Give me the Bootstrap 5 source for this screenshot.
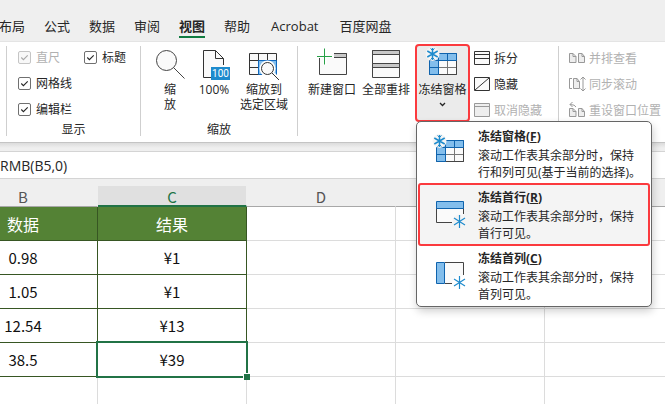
<!DOCTYPE html>
<html lang="zh-CN">
<head>
<meta charset="utf-8">
<meta name="viewport" content="width=device-width, initial-scale=1">
<title>视图 - 冻结窗格</title>
<link href="https://cdn.jsdelivr.net/npm/bootstrap@5.3.0/dist/css/bootstrap.min.css" rel="stylesheet">
<style>
body{font-family:"Open Sans","Noto Sans CJK SC",sans-serif;font-size:12px;line-height:15px;color:#262626;background:#fff;overflow:hidden}
svg{display:block;flex:none;overflow:visible}
button{font-size:12px;line-height:15px;color:inherit;background:none;border:0;padding:0}
.topbar{background:#efefef;height:41px;padding-top:16px}
.tabs{gap:19px;margin-left:-1px}
.tabs a{font-size:13px;line-height:20px;height:22px;color:#262626;text-decoration:none;white-space:nowrap}
.tabs a.current{font-weight:700;border-bottom:2px solid #107c41}
.tabs a.latin{padding:0 2px}
.ribbon{height:102px;background:#fff;border-top:1px solid #e4e4e4;border-bottom:1px solid #c4c4c4;padding:4px 0 6px}
.group{border-right:1px solid #cfcfcf;flex:none}
.group:last-child{border-right:0}
.g-edge{width:7px}
.g-show{width:134px}
.g-zoom{width:157px}
.g-window{width:261px;padding-left:9px}
.g-side{padding-left:10px}
.caption{line-height:16px;margin-bottom:-2px;text-align:center}
.checks{display:grid;grid-template-columns:66px 1fr;grid-auto-rows:26px;padding-left:11px;margin-top:-2px}
.checks div{gap:5px}
.checks .form-check-input{width:13px;height:13px;margin:0;border:1px solid #707070;border-radius:2px;background-color:#fff;box-shadow:none;flex:none}
.checks .form-check-input:checked{background-image:url("data:image/svg+xml,%3csvg xmlns='http://www.w3.org/2000/svg' viewBox='0 0 12 12'%3e%3cpath d='M2.5 6l2.3 2.3 4.7-4.7' fill='none' stroke='%23262626' stroke-width='1.2'/%3e%3c/svg%3e")}
.checks .form-check-input:disabled{opacity:.4;background-color:#eee}
.checks label{white-space:nowrap}
.off,.checks .form-check-input:disabled~label{color:#b1b1b1;opacity:1}
.zoom-tools{gap:8px;padding-left:14px}
.tool{white-space:nowrap;text-align:center;padding-top:2px}
.tool svg{margin:0 auto 2px}
.t-lens{width:30px}
.t-hundred{width:34px;margin-left:4px}
.t-select{width:50px}
.t-win{width:50px}
.picked{width:55px;height:78px;margin-top:-2px;padding:0 0 5px;border:2px solid #fb3a3e;border-radius:4px;background:#ebebeb}
.small-tool{height:26px;gap:4px;margin-top:-1px;margin-bottom:1px;white-space:nowrap}
.freeze-menu{display:block;top:100%;left:1px;width:236px;min-width:0;margin-top:-1px;padding:0 1px 1px;border:1px solid #666;border-radius:5px;background:#fff;box-shadow:1px 4px 8px rgba(0,0,0,.2);font-size:12px}
.freeze-menu .dropdown-item{border:2px solid transparent;border-radius:3px;height:61px;padding:3px 0 0 14px;gap:14px;color:#262626}
.freeze-menu .dropdown-item.hot{background:#f4f4f4;border-color:#fb3a3e;height:63px;margin-bottom:-2px}
.freeze-menu strong,.freeze-menu .line{display:block;text-align:left;line-height:17px}
.freeze-menu strong{line-height:20px}
.gap-strip{height:8px;background:linear-gradient(#dcdcdc,#efefef 5px)}
.formula{width:100%;height:28px;border:solid #d4d4d4;border-width:1px 0;padding:0;font-size:14px;font-family:"Open Sans",sans-serif;color:#262626;background:#fff;display:block;border-radius:0}
.sheet{overflow:hidden}
.grid{table-layout:fixed;width:calc(100% + 51px);margin:0 0 0 -51px;border-collapse:separate;border-spacing:0;font-family:"Noto Sans CJK SC",sans-serif;font-size:15px;line-height:20px;color:#111;text-align:center}
.grid col{width:149px}
.grid col.rest{width:auto}
.grid th,.grid td{padding:0;font-weight:400;height:34px;border-right:1px solid #dcdcdc;border-bottom:1px solid #dcdcdc}
.grid .letters th{height:28px;padding-top:8px;background:#efefef;color:#555;border-right-color:#efefef;border-bottom-color:#a8a8a8;line-height:18px}
.grid .letters th.on{color:#217346;background:linear-gradient(#efefef 7px,#e0e0e0 7px);border-bottom:2px solid #217346;line-height:17px}
.grid .titles th.fill{background:#548235;color:#fff;font-size:16px}
.grid .fill{border-color:#375623}
.grid td.active{position:relative;border-bottom-color:transparent;border-right-color:transparent}
.grid td.active::before{content:"";position:absolute;inset:-2px -2px -2px -2px;border:2px solid #217346}
.grid td.active::after{content:"";position:absolute;right:-4px;bottom:-4px;width:7px;height:7px;background:#217346;border:solid #fff;border-width:1px 0 0 1px}
</style>
<script src="https://cdn.jsdelivr.net/npm/bootstrap@5.3.0/dist/js/bootstrap.bundle.min.js"></script>
</head>
<body>
<header class="topbar">
<nav class="tabs d-flex">
<a href="#">布局</a><a href="#">公式</a><a href="#">数据</a><a href="#">审阅</a><a href="#" class="current">视图</a><a href="#">帮助</a><a href="#" class="latin">Acrobat</a><a href="#">百度网盘</a>
</nav>
</header>
<section class="ribbon d-flex">
<div class="group g-edge"></div>
<div class="group g-show d-flex flex-column justify-content-between">
<div class="checks">
<div class="d-flex align-items-center"><input class="form-check-input" type="checkbox" id="ruler" checked disabled><label for="ruler">直尺</label></div>
<div class="d-flex align-items-center"><input class="form-check-input" type="checkbox" id="heads" checked><label for="heads">标题</label></div>
<div class="d-flex align-items-center"><input class="form-check-input" type="checkbox" id="lines" checked><label for="lines">网格线</label></div>
<div></div>
<div class="d-flex align-items-center"><input class="form-check-input" type="checkbox" id="bar" checked><label for="bar">编辑栏</label></div>
</div>
<div class="caption">显示</div>
</div>
<div class="group g-zoom d-flex flex-column justify-content-between">
<div class="zoom-tools d-flex align-items-start">
<button class="tool t-lens"><svg width="30" height="32" viewBox="0 0 30 32" fill="none" stroke="#444"><circle cx="11.500" cy="12.500" r="10" fill="#fafafa"/><path d="M18.500 19.500L29.500 30.500"/></svg>缩<br>放</button>
<button class="tool t-hundred"><svg width="34" height="32" viewBox="-6 0 34 32"><path d="M.5 29.500v-27h12l8 8v19z" fill="#fafafa"/><path d="M8 29.500H.5v-27h12l8 8V17M12.500 2.500v8h8" fill="none" stroke="#333"/><path fill="#1e8bcd" d="M8 19h19v13H8z"/><text x="17.500" y="29" font-size="10" text-anchor="middle" fill="#fff" font-family="Roboto,sans-serif">100</text></svg>100%</button>
<button class="tool t-select"><svg width="30" height="32" viewBox="0 0 30 32" fill="none"><path fill="#fafafa" d="M.5 5.500h27v21H.5z"/><path fill="#83beec" d="M9 12h19v15H9z"/><path stroke="#333" d="M.5 5.500h27v21H.5zM.5 12.500h27M.5 19.500h9M9.500 5.500v21M18.500 5.500v7"/><path stroke="#1068bf" d="M27.500 12.500h-18v14h18z"/><circle cx="18.500" cy="20.500" r="8" fill="#fff"/><circle cx="18.500" cy="20.500" r="6" fill="#fafafa" stroke="#333"/><path stroke="#fff" stroke-width="4" d="M24 26l3 3"/><path stroke="#333" d="M23 25l7 7"/></svg>缩放到<br>选定区域</button>
</div>
<div class="caption">缩放</div>
</div>
<div class="group g-window d-flex align-items-start">
<button class="tool t-win"><svg width="30" height="32" viewBox="0 0 30 32" fill="none"><path d="M2.500 10v16.500h27v-21H17" fill="#fafafa" stroke="#444"/><path fill="#c8c8c8" stroke="#444" d="M17 5.500h12.500v4H17"/><path stroke="#fff" stroke-width="3" d="M8 0v17M0 8.500h17"/><path stroke="#27a147" d="M7.500 .5v16M0 8.500h15"/></svg>新建窗口</button>
<button class="tool t-win ms-1"><svg width="30" height="32" viewBox="0 0 30 32"><path fill="#fafafa" stroke="#444" d="M1.500 2.500h27v27h-27z"/><path fill="#c8c8c8" stroke="#444" d="M1.500 2.500h27v4h-27zM1.500 15.500h27v4h-27z"/></svg>全部重排</button>
<div class="dropdown position-relative ms-1">
<button class="tool picked" aria-expanded="true"><svg width="31" height="32" viewBox="0 0 31 32"><use href="#pane"/></svg>冻结窗格<svg width="9" height="14" viewBox="0 0 9 14" fill="none" stroke="#262626" stroke-width="1.300"><path d="M2 6l2.500 2.500L7 6"/></svg></button>
<div class="dropdown-menu show freeze-menu">
<button class="dropdown-item d-flex align-items-start"><svg class="mt-2" width="30" height="32" viewBox="0 0 30 32">
<g id="pane"><path fill="#fafafa" stroke="#444" d="M2.500 5.500h27v21h-27z"/><path fill="#83beec" d="M2.500 5.500h27v7h-18v14h-9z"/><path fill="none" stroke="#777" d="M12 19.500h17M20.500 13v13"/><path fill="none" stroke="#0f63ad" d="M29.500 12.500V5.500h-27v21h9v-14M2.500 12.500h27M2.500 19.500h9M11.500 5.500v7M20.500 5.500v7"/><path fill="none" stroke="#444" d="M12 26.500h17.500V13"/><circle cx="5.500" cy="6" r="7" fill="#f5f5f5"/><path fill="none" stroke="#1e8bcd" stroke-width="1.500" d="M5.500 0v12M.3 3l10.400 6M.3 9l10.400-6"/><path fill="none" stroke="#1e8bcd" d="M3.500.500l2 2 2-2M3.500 11.500l2-2 2 2"/></g></svg>
<span><strong>冻结窗格(<u>F</u>)</strong><span class="line">滚动工作表其余部分时，保持</span><span class="line">行和列可见(基于当前的选择)。</span></span></button>
<button class="dropdown-item hot d-flex align-items-start"><svg class="mt-2" width="30" height="32" viewBox="0 0 30 32" fill="none"><path fill="#fafafa" d="M2.500 5.500h27v21h-27z"/><path stroke="#444" d="M2.500 12v14.500H18M29.500 12v6"/><path fill="#83beec" stroke="#0f63ad" d="M2.500 5.500h27v7h-27z"/><circle cx="25.500" cy="25.500" r="7" fill="#f4f4f4"/><path stroke="#1e8bcd" stroke-width="1.200" d="M25.500 19v13M20 22l11 7M20 29l11-7"/></svg>
<span><strong>冻结首行(<u>R</u>)</strong><span class="line">滚动工作表其余部分时，保持</span><span class="line">首行可见。</span></span></button>
<button class="dropdown-item d-flex align-items-start"><svg class="mt-2" width="30" height="32" viewBox="0 0 30 32" fill="none"><path fill="#fafafa" d="M2.500 5.500h27v21h-27z"/><path stroke="#444" d="M11 5.500h18.500V18M11 26.500h7"/><path fill="#83beec" stroke="#0f63ad" d="M2.500 5.500h8v21h-8z"/><circle cx="25.500" cy="25.500" r="7" fill="#fff"/><path stroke="#1e8bcd" stroke-width="1.200" d="M25.500 19v13M20 22l11 7M20 29l11-7"/></svg>
<span><strong>冻结首列(<u>C</u>)</strong><span class="line">滚动工作表其余部分时，保持</span><span class="line">首列可见。</span></span></button>
</div>
</div>
<div class="ms-1">
<button class="small-tool d-flex align-items-center"><svg width="16" height="14" viewBox="0 0 16 14" fill="#fafafa" stroke="#333"><path d="M.5.5h15v13H.5z"/><path d="M.5 3.500h15M.5 7.500h15"/></svg>拆分</button>
<button class="small-tool d-flex align-items-center"><svg width="16" height="14" viewBox="0 0 16 14" fill="#fafafa" stroke="#333"><path d="M.5.5h15v13H.5zM1 13L15 1"/></svg>隐藏</button>
<button class="small-tool d-flex align-items-center off" disabled><svg width="16" height="14" viewBox="0 0 16 14" fill="#eee" stroke="#999"><path d="M.5.5h15v13H.5z"/><path d="M.5 3.500h15"/></svg>取消隐藏</button>
</div>
</div>
<div class="group g-side">
<button class="small-tool d-flex align-items-center off" disabled><svg width="16" height="14" viewBox="0 0 16 14" fill="#eee" stroke="#999"><path d="M.5 2.500H4l3 3v6H.5zM4 2.500v3h3M9.500 2.500H13l2.500 3v6h-6zM13 2.500v3h2.500"/></svg>并排查看</button>
<button class="small-tool d-flex align-items-center off" disabled><svg width="16" height="14" viewBox="0 0 16 14" fill="none" stroke="#999"><path d="M3 1.500H.5v10H3"/><path fill="#eee" d="M4.500 1.500H8l2.500 3v7h-6zM8 1.500v3h2.500"/><path d="M14 0v14M11.500 2.500L14 0l2.500 2.500M11.500 11.500L14 14l2.500-2.500"/></svg>同步滚动</button>
<button class="small-tool d-flex align-items-center off" disabled><svg width="16" height="14" viewBox="0 0 16 14" fill="none" stroke="#999"><path fill="#eee" d="M.5 5.500H4l3 3v5H.5zM4 5.500v3h3M9.500 5.500H13l2.500 3v5h-6zM13 5.500v3h2.500"/><path d="M7 4Q6 1.500 1 1.500M3.500-1L1 1.500 3.500 4"/></svg>重设窗口位置</button>
</div>
</section>
<div class="gap-strip"></div>
<input class="formula" aria-label="编辑栏" value="RMB(B5,0)">
<main class="sheet">
<table class="grid">
<colgroup><col><col><col><col><col><col class="rest"></colgroup>
<thead>
<tr class="letters"><th>B</th><th class="on">C</th><th>D</th><th>E</th><th>F</th></tr>
<tr class="titles"><th class="fill">数据</th><th class="fill">结果</th><td></td><td></td><td></td></tr>
</thead>
<tbody>
<tr><td class="fill">0.98</td><td class="fill">¥1</td><td></td><td></td><td></td></tr>
<tr><td class="fill">1.05</td><td class="fill">¥1</td><td></td><td></td><td></td></tr>
<tr><td class="fill">12.54</td><td class="fill">¥13</td><td></td><td></td><td></td></tr>
<tr><td class="fill">38.5</td><td class="fill active">¥39</td><td></td><td></td><td></td></tr>
<tr><td></td><td></td><td></td><td></td><td></td></tr>
</tbody>
</table>
</main>
</body>
</html>
